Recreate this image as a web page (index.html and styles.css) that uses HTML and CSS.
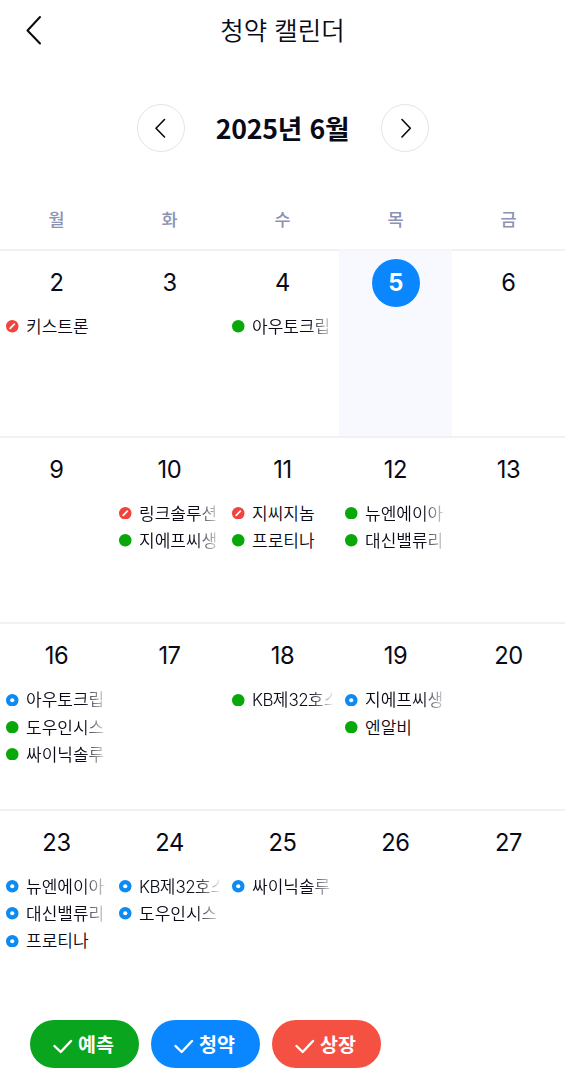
FILE: index.html
```html
<!DOCTYPE html>
<html lang="ko">
<head>
<meta charset="utf-8">
<title>청약 캘린더</title>
<link rel="stylesheet" href="styles.css">
</head>
<body>
<header class="topbar">
  <button class="back" aria-label="뒤로"><svg width="18" height="32" viewBox="0 0 18 32"><path d="M14 3L1.5 16.5L14 29.5"/></svg></button>
  <h1 class="title">청약 캘린더</h1>
</header>
<nav class="month">
  <button class="round" aria-label="이전 달"><svg width="12" height="22" viewBox="0 0 12 22"><path d="M9.5 2.5L1 11.2L9.5 20"/></svg></button>
  <h2 class="month-name">2025년 6월</h2>
  <button class="round" aria-label="다음 달"><svg width="12" height="22" viewBox="0 0 12 22"><path d="M3 2.5L11.3 11.2L3 20"/></svg></button>
</nav>
<div class="weekdays"><span>월</span><span>화</span><span>수</span><span>목</span><span>금</span></div>
<main class="calendar" id="calendar"></main>
<footer class="filters">
  <button class="chip green"><svg width="20" height="16" viewBox="0 0 20 16"><path d="M1.5 8L7.7 14L18 3"/></svg>예측</button>
  <button class="chip blue"><svg width="20" height="16" viewBox="0 0 20 16"><path d="M1.5 8L7.7 14L18 3"/></svg>청약</button>
  <button class="chip red"><svg width="20" height="16" viewBox="0 0 20 16"><path d="M1.5 8L7.7 14L18 3"/></svg>상장</button>
</footer>
<script src="calendar.js"></script>
</body>
</html>
```
FILE: styles.css
```css
* { box-sizing: border-box; }
body {
  margin: 0;
  width: 565px;
  height: 1080px;
  overflow: hidden;
  background: #fff;
  color: #090a17;
  font-family: "Noto Sans CJK KR", sans-serif;
}
button { border: 0; padding: 0; background: none; font: inherit; }
h1, h2 { margin: 0; }
svg { display: block; fill: none; stroke: currentColor; stroke-linecap: round; stroke-linejoin: round; }
.topbar { display: grid; grid-template-columns: 60px 1fr 60px; align-items: center; height: 60px; }
.back { display: flex; margin-left: 26px; color: #08090c; stroke-width: 2; }
.title { height: 60px; text-align: center; font-size: 25.5px; line-height: 58px; font-weight: 350; }
.month { display: flex; align-items: center; justify-content: space-between; width: 292px; height: 48px; margin: 44px auto 0; }
.round { display: grid; place-items: center; width: 48px; height: 48px; border: 1.5px solid #e2e6e8; border-radius: 50%; color: #08090c; stroke-width: 1.6; }
.month-name { font-size: 26.7px; line-height: 46px; font-weight: 700; letter-spacing: -0.2px; white-space: nowrap; }
.num { font-family: Inter, sans-serif; }
.weekdays { display: grid; grid-template-columns: repeat(5, 113px); height: 97px; padding-top: 54px; text-align: center; font-size: 17.5px; line-height: 26px; font-weight: 500; color: #8b92b2; }
.calendar { display: grid; grid-template-columns: repeat(5, 113px); grid-template-rows: repeat(4, 186.7px); }
.day { border-top: 2px solid #f0f1f3; padding-top: 8px; }
.day.today { background: #f7f9fe; border-color: #f4f6fb; }
.date { display: grid; place-items: center; width: 48px; height: 48px; margin: 0 auto; font-family: Inter, sans-serif; font-size: 23.7px; font-weight: 400; line-height: 48px; letter-spacing: -0.4px; }
.today .date { border-radius: 50%; background: #0a86ff; color: #fff; font-weight: 700; }
.events { margin: 6px 0 0; padding: 0; list-style: none; }
.event { display: flex; align-items: center; gap: 7.5px; height: 27.1px; padding-left: 6px; }
.dot { flex: none; width: 12.5px; height: 12.5px; stroke: none; }
.name { width: 80px; height: 27px; overflow: hidden; white-space: nowrap; font-size: 17px; line-height: 25px; font-weight: 350; -webkit-mask-image: linear-gradient(90deg, #000 57px, rgba(0, 0, 0, 0.1) 80px); mask-image: linear-gradient(90deg, #000 57px, rgba(0, 0, 0, 0.1) 80px); }
.name.short { -webkit-mask-image: none; mask-image: none; }
.name .num { letter-spacing: -0.6px; }
.filters { display: flex; gap: 12px; padding: 24px 30px 0; }
.chip { display: flex; align-items: center; justify-content: center; gap: 5px; width: 109px; height: 48px; padding-right: 2px; border-radius: 24px; color: #fff; font-size: 19.5px; line-height: 48px; font-weight: 700; }
.chip svg { stroke-width: 2.4; margin-top: 4px; }
.green { background: #0aa51e; }
.blue { background: #0a86ff; }
.red { background: #f55142; }
```
FILE: calendar.js
```javascript
const icons = {
  green: '<circle cx="6" cy="6" r="6" fill="#08a80b"/>',
  blue: '<circle cx="6" cy="6" r="6" fill="#0d8bf2"/><circle cx="6" cy="6" r="2" fill="#fff"/>',
  red: '<circle cx="6" cy="6" r="6" fill="#f0443c"/><path d="M4 8L8 4" stroke="#fff" stroke-width="1.7"/>'
};
const weeks = [
  [[2, 'red:키스트론'], [3], [4, 'green:아우토크립'], [5], [6]],
  [[9], [10, 'red:링크솔루션', 'green:지에프씨생명'], [11, 'red:지씨지놈', 'green:프로티나'], [12, 'green:뉴엔에이아이', 'green:대신밸류리'], [13]],
  [[16, 'blue:아우토크립', 'green:도우인시스', 'green:싸이닉솔루'], [17], [18, 'green:KB제32호스'], [19, 'blue:지에프씨생명', 'green:엔알비'], [20]],
  [[23, 'blue:뉴엔에이아이', 'blue:대신밸류리', 'blue:프로티나'], [24, 'blue:KB제32호스', 'blue:도우인시스'], [25, 'blue:싸이닉솔루'], [26], [27]]
];
const eventRow = (entry) => {
  const [kind, name] = entry.split(':');
  const text = name.replace(/[A-Z0-9]+/g, '<span class="num">$&</span>');
  return `<li class="event"><svg class="dot" viewBox="0 0 12 12">${icons[kind]}</svg><span class="name${name.length < 5 ? ' short' : ''}">${text}</span></li>`;
};
document.getElementById('calendar').innerHTML = weeks.flat().map(([date, ...events]) =>
  `<section class="day${date === 5 ? ' today' : ''}"><div class="date">${date}</div><ul class="events">${events.map(eventRow).join('')}</ul></section>`
).join('');
```
